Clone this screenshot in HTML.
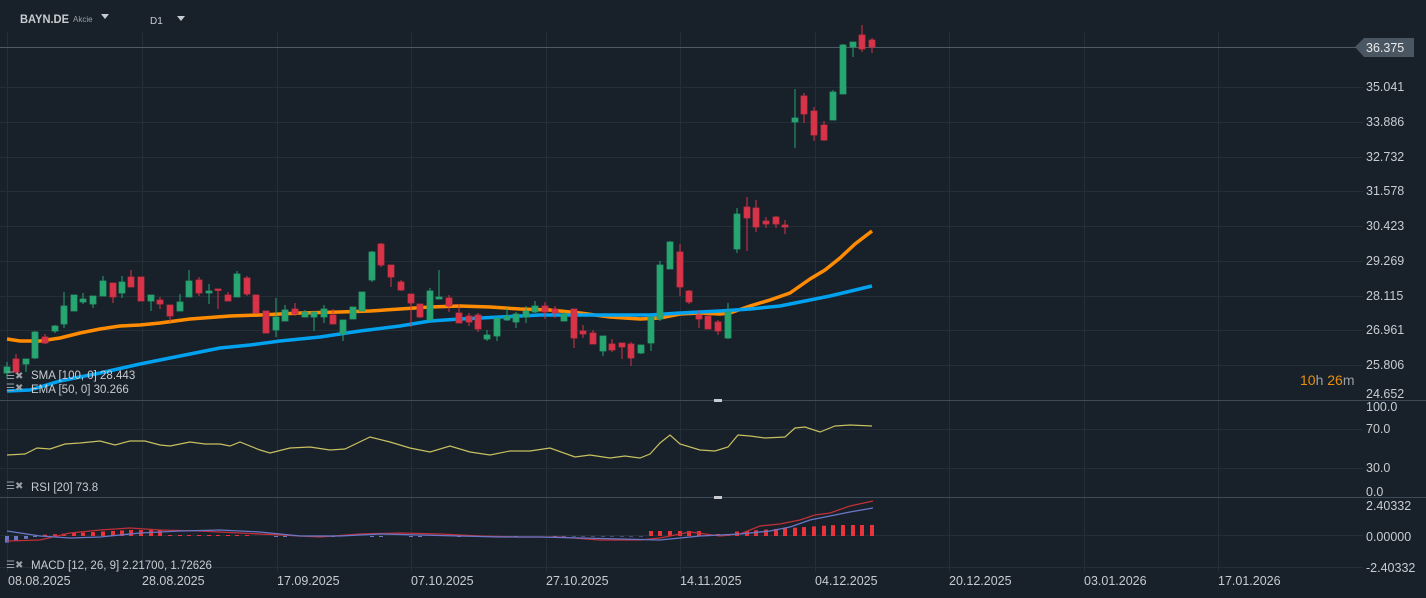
<!DOCTYPE html><html><head><meta charset="utf-8"><style>
body{margin:0;background:#18202a;width:1426px;height:598px;overflow:hidden;font-family:"Liberation Sans",sans-serif}
svg{position:absolute;left:0;top:0}
</style></head><body>
<svg width="1426" height="598" xmlns="http://www.w3.org/2000/svg" id="s">
<rect width="1426" height="598" fill="#18202a"/>
<g stroke="#232e37" stroke-width="1" id="grid">
<line x1="0" y1="87.5" x2="1363" y2="87.5"/><line x1="0" y1="122.5" x2="1363" y2="122.5"/><line x1="0" y1="157.5" x2="1363" y2="157.5"/><line x1="0" y1="191.5" x2="1363" y2="191.5"/><line x1="0" y1="226.5" x2="1363" y2="226.5"/><line x1="0" y1="261.5" x2="1363" y2="261.5"/><line x1="0" y1="296.5" x2="1363" y2="296.5"/><line x1="0" y1="330.5" x2="1363" y2="330.5"/><line x1="0" y1="365.5" x2="1363" y2="365.5"/>
<line x1="0" y1="429.5" x2="1363" y2="429.5"/><line x1="0" y1="468.5" x2="1363" y2="468.5"/>
<line x1="0" y1="535.5" x2="1363" y2="535.5"/><line x1="0" y1="567.5" x2="1363" y2="567.5"/>
<line x1="7.5" y1="32" x2="7.5" y2="572"/><line x1="142.5" y1="32" x2="142.5" y2="572"/><line x1="277.5" y1="32" x2="277.5" y2="572"/><line x1="411.5" y1="32" x2="411.5" y2="572"/><line x1="546.5" y1="32" x2="546.5" y2="572"/><line x1="680.5" y1="32" x2="680.5" y2="572"/><line x1="815.5" y1="32" x2="815.5" y2="572"/><line x1="949.5" y1="32" x2="949.5" y2="572"/><line x1="1084.5" y1="32" x2="1084.5" y2="572"/><line x1="1218.5" y1="32" x2="1218.5" y2="572"/>
</g>
<line x1="0" y1="400.5" x2="1426" y2="400.5" stroke="#3e4a55"/>
<line x1="0" y1="497.5" x2="1426" y2="497.5" stroke="#3e4a55"/>
<rect x="714" y="399" width="8" height="3" fill="#c8ccd0"/><rect x="714" y="496" width="8" height="3" fill="#c8ccd0"/>
<line x1="0" y1="47.5" x2="1360" y2="47.5" stroke="#4e5963"/>
<polyline fill="none" stroke="#ff8c00" stroke-width="3.5" stroke-linejoin="round" points="7,339 20,341 40,341 60,338 80,333 100,329 120,326 140,325 160,323 190,319 230,316 260,315 300,313 340,312 370,311 400,309 430,307 460,306 490,307 520,309 550,310 580,313 610,317 640,319 660,318 680,314 700,313 720,314 730,313 750,306 770,300 790,293 810,279 825,270 840,258 855,244 872,231"/>
<polyline fill="none" stroke="#00a2f0" stroke-width="3.5" stroke-linejoin="round" points="7,391 30,390 60,381 100,373 140,364 180,356 220,348 250,345 280,341 320,337 360,331 400,326 430,321 460,319 500,317 540,315 580,315 620,315 650,315 680,313 720,311 750,309 780,306 800,302 830,296 872,286"/>
<g id="c"></g>
<polyline fill="none" stroke="#c8c060" stroke-width="1.2" points="7,455 25,454 37,448 50,449 65,444 80,443 100,441 115,445 130,441 145,441 160,445 170,446 190,442 205,444 220,444 230,446 240,442 260,450 270,453 290,448 310,447 330,450 345,449 370,437 390,442 410,448 430,452 450,446 470,452 490,455 510,451 530,451 550,448 575,457 590,455 610,458 625,456 640,458 650,454 660,443 670,435 680,444 700,450 715,451 728,447 738,435 750,436 765,438 785,437 795,428 805,427 820,432 835,426 850,425 872,426"/>
<g id="h"></g>
<polyline fill="none" stroke="#c03038" stroke-width="1.3" points="7,541 40,540 70,533 100,530 130,528 160,530 200,531 240,533 280,535 320,537 360,534 400,533 440,534 480,536 520,537 560,537 600,540 640,540 660,538 690,532 720,536 740,534 760,526 780,524 800,520 815,515 830,513 850,506 873,501"/>
<polyline fill="none" stroke="#6a78c8" stroke-width="1.3" points="7,531 40,536 70,538 100,537 140,533 180,531 220,530 260,532 300,536 340,536 380,534 420,535 460,536 500,537 540,537 580,538 620,539 660,540 700,536 740,534 770,531 790,527 810,520 830,516 850,512 873,508"/>
<g fill="#c8ccd0" font-size="12.5">
<text x="1366" y="91">35.041</text><text x="1366" y="126">33.886</text><text x="1366" y="161">32.732</text><text x="1366" y="195">31.578</text><text x="1366" y="230">30.423</text><text x="1366" y="265">29.269</text><text x="1366" y="300">28.115</text><text x="1366" y="334">26.961</text><text x="1366" y="369">25.806</text><text x="1366" y="398">24.652</text>
<text x="1366" y="411">100.0</text><text x="1366" y="433">70.0</text><text x="1366" y="472">30.0</text><text x="1366" y="496">0.0</text>
<text x="1366" y="510">2.40332</text><text x="1366" y="541">0.00000</text><text x="1366" y="572">-2.40332</text>
<text x="8" y="585">08.08.2025</text><text x="142" y="585">28.08.2025</text><text x="277" y="585">17.09.2025</text><text x="411" y="585">07.10.2025</text><text x="546" y="585">27.10.2025</text><text x="680" y="585">14.11.2025</text><text x="815" y="585">04.12.2025</text><text x="949" y="585">20.12.2025</text><text x="1084" y="585">03.01.2026</text><text x="1218" y="585">17.01.2026</text>
</g>
<path d="M1355,47 L1364,38 H1414 V57 H1364 Z" fill="#4a5662"/>
<text x="1366" y="52" fill="#e8eaec" font-size="12.5">36.375</text>
<text x="1300" y="385" font-size="14" fill="#e8900c">10<tspan fill="#9aa0a6">h</tspan> 26<tspan fill="#9aa0a6">m</tspan></text>
<g fill="#c8ccd0" font-size="11.5">
<text x="20" y="23" font-weight="bold" font-size="12" textLength="49" lengthAdjust="spacingAndGlyphs">BAYN.DE</text><text x="73" y="22" font-size="8" fill="#9aa0a6">Akcie</text>
<path d="M101,14 h8 l-4,5z"/><text x="150" y="24" font-size="10">D1</text><path d="M177,16 h8 l-4,5z"/>
<text x="31" y="379">SMA [100, 0] 28.443</text><text x="31" y="393">EMA [50, 0] 30.266</text>
<text x="31" y="491">RSI [20] 73.8</text><text x="31" y="569">MACD [12, 26, 9] 2.21700, 1.72626</text>
</g>
<g fill="#9aa0a6" font-size="10"><text x="6" y="379">☰✖</text><text x="6" y="391">☰✖</text><text x="6" y="489">☰✖</text><text x="6" y="568">☰✖</text></g>
</svg>
<script>
var d=[[7,367,373,362,378,'g'],[16,359,372,354,374,'r'],[26,359,364,359,372,'g'],[35,332,358,331,359,'g'],[45,337,343,334,344,'r'],[55,326,331,325,333,'g'],[64,306,324,292,328,'g'],[74,295,311,295,311,'g'],[83,299,302,293,304,'g'],[93,296,304,296,308,'g'],[103,281,296,276,296,'g'],[113,283,297,283,303,'r'],[122,282,293,276,298,'g'],[131,277,287,270,287,'r'],[141,277,301,277,301,'r'],[151,295,301,295,311,'g'],[160,300,304,297,309,'r'],[170,305,316,305,322,'r'],[180,302,311,294,311,'g'],[189,281,297,270,297,'g'],[199,280,293,277,296,'r'],[209,291,293,284,304,'g'],[218,289,290,289,309,'r'],[228,295,301,292,301,'r'],[237,274,297,271,297,'g'],[247,278,294,276,296,'r'],[256,295,313,295,313,'r'],[266,311,333,311,333,'r'],[276,317,330,298,337,'g'],[285,310,321,305,321,'g'],[295,309,314,303,316,'r'],[305,312,317,310,317,'g'],[314,312,317,312,331,'g'],[324,309,317,305,323,'g'],[333,315,324,309,324,'r'],[343,320,334,320,341,'g'],[353,307,319,307,319,'g'],[362,292,311,292,311,'g'],[372,252,280,251,282,'g'],[381,244,265,243,267,'r'],[391,265,277,265,287,'r'],[401,282,290,280,291,'r'],[411,294,303,294,327,'r'],[420,304,317,304,318,'r'],[430,291,320,288,320,'g'],[439,297,299,270,299,'g'],[449,298,306,295,312,'r'],[459,313,323,304,323,'r'],[469,316,322,313,326,'r'],[478,315,329,313,332,'r'],[487,335,339,330,341,'g'],[497,318,336,318,341,'g'],[507,316,320,308,321,'g'],[516,314,322,312,328,'g'],[526,311,317,306,323,'g'],[535,306,312,301,313,'g'],[545,306,312,302,319,'r'],[555,309,313,306,318,'r'],[564,314,321,312,321,'g'],[574,309,338,309,348,'r'],[583,331,334,325,338,'r'],[593,333,344,330,344,'r'],[603,336,351,336,356,'g'],[612,344,350,339,352,'r'],[622,343,347,343,359,'r'],[631,344,358,342,366,'r'],[641,345,353,345,354,'g'],[651,317,343,317,351,'g'],[660,265,319,261,321,'g'],[670,242,269,241,269,'g'],[680,252,287,244,296,'r'],[689,291,302,290,304,'r'],[699,315,319,310,328,'r'],[708,316,329,316,329,'r'],[718,322,331,320,335,'r'],[728,312,338,303,339,'g'],[737,214,249,208,253,'g'],[747,207,218,197,251,'r'],[756,208,227,200,232,'r'],[766,221,224,217,228,'r'],[776,217,224,216,228,'r'],[785,225,227,220,234,'r'],[795,118,122,89,148,'g'],[804,96,114,93,123,'r'],[814,111,135,107,141,'r'],[824,125,140,121,141,'r'],[833,92,120,90,120,'g'],[843,45,94,44,94,'g'],[853,42,47,42,57,'g'],[862,35,49,25,52,'r'],[872,40,47,38,53,'r']];
var ns='http://www.w3.org/2000/svg',g=document.getElementById('c'),h=document.getElementById('h');
function el(p,t,a){var e=document.createElementNS(ns,t);for(var k in a)e.setAttribute(k,a[k]);p.appendChild(e);}
d.forEach(function(c){var col=c[5]=='g'?'#26a671':'#d9334a',b=c[5]=='g'?'#2a9a6a':'#c8303f';
el(g,'line',{x1:c[0],x2:c[0],y1:c[3],y2:c[4],stroke:col,'stroke-width':1});
el(g,'rect',{x:c[0]-3,y:c[1],width:6,height:Math.max(1.5,c[2]-c[1]),fill:col,stroke:b,'stroke-width':0.8});
var x=c[0],v;
if(x<40)v=(40-x)/5;else if(x<170)v=-Math.min(6,(x-40)/18+1);else if(x<250)v=-1;else if(x<560)v=(x%3==0)?1:0;else if(x<650)v=0.5;else if(x<700)v=-5;else if(x<730)v=-2;else v=-Math.min(11,4+(x-730)/15);
if(v!=0){el(h,'rect',{x:x-2,y:v<0?536+v:536,width:4,height:Math.abs(v),fill:v<0?'#e8343c':'#6a78c8'});}
});
</script>
</body></html>
